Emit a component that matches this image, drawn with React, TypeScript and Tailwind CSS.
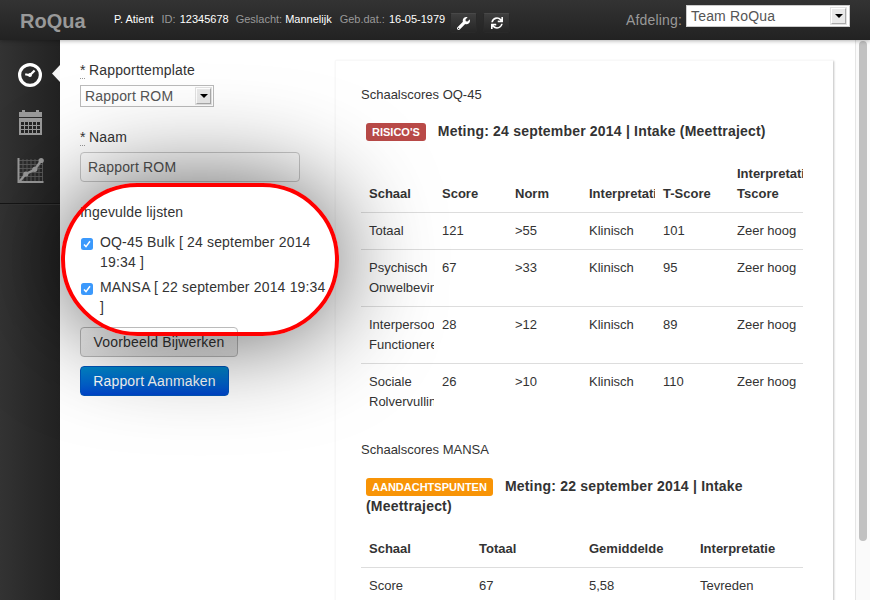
import React from "react";
import { FaSync, FaWrench } from "react-icons/fa";

const Arrow = () => (
  <span className="flex h-4 w-[15px] shrink-0 items-center justify-center border border-t-white border-l-white border-r-[#aaa] border-b-[#aaa] bg-[#e9e9e9] shadow-[0_0_0_1px_#e2e2e2]">
    <svg width="8" height="4" viewBox="0 0 8 4"><path d="M0 0h8L4 4z" fill="#000" /></svg>
  </span>
);

const NavBtn = ({ children }: { children: React.ReactNode }) => (
  <span className="flex h-[20px] w-[27px] items-center justify-center rounded-[2px] border border-[#292929] border-t-[#484848] bg-linear-to-b from-[#3e3e3e] to-[#262626] text-[12px] text-white">
    {children}
  </span>
);

const Check = () => (
  <span className="mt-[6px] flex size-[12px] shrink-0 items-center justify-center rounded-[2.5px] bg-[#3b99fc]">
    <svg width="8" height="8" viewBox="0 0 8 8"><path d="M1 4.4 3 6.6 7 1.2" fill="none" stroke="#fff" strokeWidth="1.5" /></svg>
  </span>
);

const rows = [
  [["Totaal"], "121", ">55", "Klinisch", "101", "Zeer hoog"],
  [["Psychisch", "Onwelbevinden"], "67", ">33", "Klinisch", "95", "Zeer hoog"],
  [["Interpersoonlijk", "Functioneren"], "28", ">12", "Klinisch", "89", "Zeer hoog"],
  [["Sociale", "Rolvervulling"], "26", ">10", "Klinisch", "110", "Zeer hoog"],
] as [string[], string, string, string, string, string][];

const Cell = ({ children }: { children: React.ReactNode }) => (
  <div className="overflow-hidden py-2 pl-2 whitespace-nowrap">{children}</div>
);

const Required = () => (
  <span className="mr-[3.5px] inline-block h-[19px] border-b border-dotted border-[#999] align-top tracking-[0px]">*</span>
);

export default function App() {
  return (
    <div className="relative flex h-[600px] w-[870px] flex-col overflow-hidden bg-white font-['Liberation_Sans',Arial,sans-serif] text-[14px] leading-5 tracking-[0.17px] text-[#333]">
      <header className="relative z-20 flex h-10 shrink-0 bg-linear-to-b from-[#333] to-[#222] text-[#999] shadow-[0_1px_4px_rgba(0,0,0,0.3)]">
        <div className="w-[114px] pt-[11px] pl-5 text-[20px] font-bold tracking-[0px]">RoQua</div>
        <div className="flex w-[332px] gap-2 pt-[9px] text-[11px] tracking-[0px] whitespace-nowrap">
          <span className="text-white">P. Atient</span>
          <span>ID: <b className="pl-px font-normal text-white">12345678</b></span>
          <span className="-ml-px">Geslacht: <b className="font-normal text-white">Mannelijk</b></span>
          <span>Geb.dat.: <b className="pl-px font-normal text-white">16-05-1979</b></span>
        </div>
        <div className="flex gap-[6px] pt-[13px] pl-1">
          <NavBtn><FaWrench size={13} /></NavBtn>
          <NavBtn><FaSync /></NavBtn>
        </div>
        <div className="ml-auto flex pr-5 text-[14px]">
          <span className="pt-[10px] pr-1">Afdeling:</span>
          <div className="mt-[5px] flex h-[22px] w-[164px] items-center justify-between border border-[#ccc] bg-white pr-[3px] pl-1 text-[#555]">
            <span>Team RoQua</span><Arrow />
          </div>
        </div>
      </header>

      <div className="relative flex min-h-0 flex-1">
        <nav className="relative w-[60px] shrink-0 bg-linear-to-r from-[#333] to-[#222]">
          <div className="flex h-[164px] flex-col items-center border-b border-[#151515] pt-[23px] shadow-[0_1px_0_#333]">
            <svg width="24" height="24" viewBox="0 0 24 24" fill="none" stroke="#fff"><circle cx="12" cy="12" r="10.4" strokeWidth="3.2" /><path d="M7.2 11.3 11.8 12.300 16.600 7.500" strokeWidth="2.2" /><circle cx="12" cy="12" r="1.200" strokeWidth="1.5" /></svg>
            <svg className="mt-[23px]" width="24" height="26" viewBox="0 0 24 26" fill="#999"><path d="M1 2h3V0h3v2h11V0h3v2h3v5H1zM1 8h23v17H1z" /><path d="M3 13.500h19M3 17.500h19M3 21.500h19" stroke="#252525" strokeWidth="3" strokeDasharray="3 1" /></svg>
            <svg className="mt-[21px]" width="27" height="27" viewBox="0 0 27 27" fill="none" stroke="#999"><path d="M6 2v22M10 2v22M14 2v22M18 2v22M22 2v22M25.500 2v22M2 3.500h24M2 7.500h24M2 11.500h24M2 15.500h24M2 19.500h24" stroke="#5c5c5c" strokeWidth=".9" /><path d="M1.500 1v24h25" strokeWidth="2" /><path d="m2.500 24.500 6.300-7.500 9-4.500 6.500-9" strokeWidth="2.300" /><g fill="#999" stroke="none"><circle cx="8.800" cy="17" r="2.600" /><circle cx="17.800" cy="12.300" r="2.600" /><circle cx="24.200" cy="3.500" r="2.600" /></g></svg>
          </div>
          <svg className="absolute top-[25px] right-0" width="8" height="17" viewBox="0 0 8 17"><path d="M8 0v17L0 8.500z" fill="#f4f4f4" /></svg>
        </nav>

        <main className="flex min-w-0 flex-1">
          <section className="w-[275px] shrink-0 pt-5 pl-5">
            <div><Required />Rapporttemplate</div>
            <div className="mt-[5px] flex h-[22px] w-[134px] items-center justify-between border border-[#bbb] bg-white pr-[2px] pl-1 text-[#555]"><span>Rapport ROM</span><Arrow /></div>
            <div className="mt-5"><Required />Naam</div>
            <div className="mt-[5px] h-[30px] w-[220px] rounded-[4px] border border-[#ccc] bg-white px-[7px] pt-1 text-[#555]">Rapport ROM</div>
            <div className="mt-5">Ingevulde lijsten</div>
            <div className="mt-[10px] flex w-[250px] gap-2 pl-px"><Check /><span className="-ml-px w-[230px]">OQ-45 Bulk [ 24 september 2014 19:34 ]</span></div>
            <div className="mt-[5px] flex w-[250px] gap-2 pl-px"><Check /><span className="-ml-px w-[230px]">MANSA [ 22 september 2014 19:34 ]</span></div>
            <div className="mt-[10px] flex h-[30px] w-[158px] items-center justify-center rounded-[4px] border border-[#bbb] bg-linear-to-b from-white to-[#e6e6e6]">Voorbeeld Bijwerken</div>
            <div className="mt-[9px] flex h-[30px] w-[149px] items-center justify-center rounded-[4px] border border-[#0055bb] bg-linear-to-b from-[#0088cc] to-[#0044cc] text-white">Rapport Aanmaken</div>
          </section>

          <section className="mt-5 h-[560px] w-[498px] shrink-0 overflow-hidden border-t border-l border-[#f8f8f8] bg-white pt-6 pl-[25px] text-[13px] tracking-[0px] shadow-[1px_1px_2px_rgba(0,0,0,0.25)]">
            <div>Schaalscores OQ-45</div>
            <div className="mt-4 pl-[5px] text-[14px] font-bold tracking-[0.2px]">
              <span className="mr-3 inline-block h-[18px] rounded-[3px] bg-[#b94a48] px-[6px] text-[11px] leading-[18px] tracking-[0px] text-white">RISICO'S</span>Meting: 24 september 2014 | Intake (Meettraject)
            </div>
            <div className="mt-[15px] w-[442px]">
              <div className="grid grid-cols-[73px_73px_74px_74px_74px_74px] items-end font-bold">
                <Cell>Schaal</Cell><Cell>Score</Cell><Cell>Norm</Cell><Cell>Interpretatie</Cell><Cell>T-Score</Cell><Cell>Interpretatie<br />Tscore</Cell>
              </div>
              {rows.map((r) => (
                <div key={r[1] as string} className="grid grid-cols-[73px_73px_74px_74px_74px_74px] border-t border-[#ddd]">
                  <Cell>{r[0].map((l) => <div key={l}>{l}</div>)}</Cell>
                  {r.slice(1).map((c, i) => <Cell key={i}>{c}</Cell>)}
                </div>
              ))}
            </div>
            <div className="mt-5">Schaalscores MANSA</div>
            <div className="mt-4 w-[442px] pl-[5px] text-[14px] font-bold tracking-[0.2px]">
              <span className="mr-3 inline-block h-[18px] rounded-[3px] bg-[#f89406] px-[6px] text-[11px] leading-[18px] tracking-[0px] text-white">AANDACHTSPUNTEN</span>Meting: 22 september 2014 | Intake (Meettraject)
            </div>
            <div className="mt-[15px] w-[442px]">
              <div className="grid grid-cols-[110px_110px_111px_111px] font-bold"><Cell>Schaal</Cell><Cell>Totaal</Cell><Cell>Gemiddelde</Cell><Cell>Interpretatie</Cell></div>
              <div className="grid grid-cols-[110px_110px_111px_111px] border-t border-[#ddd]"><Cell>Score</Cell><Cell>67</Cell><Cell>5,58</Cell><Cell>Tevreden</Cell></div>
            </div>
          </section>

          <div className="ml-auto w-[15px] shrink-0 border-l border-[#e5e5e5] bg-[#fafafa] pt-px pl-[3px]">
            <div className="h-[500px] w-2 rounded-full bg-[#c1c1c1]" />
          </div>
        </main>
        <div className="pointer-events-none absolute top-[143px] left-[61px] h-[153px] w-[278px] rounded-[80px] border-4 border-[#f00] shadow-[0_0_100px_rgba(0,0,0,0.65)]" />
      </div>
    </div>
  );
}
